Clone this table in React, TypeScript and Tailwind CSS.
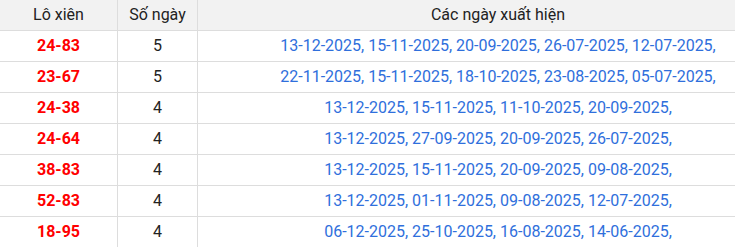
import React from "react";

const rows: [string, string, string][] = [
  ["24-83", "5", "13-12-2025, 15-11-2025, 20-09-2025, 26-07-2025, 12-07-2025,"],
  ["23-67", "5", "22-11-2025, 15-11-2025, 18-10-2025, 23-08-2025, 05-07-2025,"],
  ["24-38", "4", "13-12-2025, 15-11-2025, 11-10-2025, 20-09-2025,"],
  ["24-64", "4", "13-12-2025, 27-09-2025, 20-09-2025, 26-07-2025,"],
  ["38-83", "4", "13-12-2025, 15-11-2025, 20-09-2025, 09-08-2025,"],
  ["52-83", "4", "13-12-2025, 01-11-2025, 09-08-2025, 12-07-2025,"],
  ["18-95", "4", "06-12-2025, 25-10-2025, 16-08-2025, 14-06-2025,"],
];

export default function App() {
  return (
    <div className="w-[735px] h-[247px] overflow-hidden bg-white" style={{ fontFamily: "Roboto, 'Noto Sans', sans-serif" }}>
      <div className="w-[798px] text-[16px] leading-[30px]">
        <div className="flex h-[31px] bg-[#f2f2f2] border-b border-[#dddddd] text-[#222222]">
          <div className="w-[118px] shrink-0 border-r border-[#dddddd] text-center">Lô xiên</div>
          <div className="w-[80px] shrink-0 border-r border-[#dddddd] text-center">Số ngày</div>
          <div className="flex-1 text-center">Các ngày xuất hiện</div>
        </div>
        {rows.map(([a, b, c]) => (
          <div key={a} className="flex h-[31px] border-b border-[#dddddd]">
            <div className="w-[118px] shrink-0 border-r border-[#dddddd] text-center font-bold text-[#ff0000]">{a}</div>
            <div className="w-[80px] shrink-0 border-r border-[#dddddd] text-center text-[#222222]">{b}</div>
            <div className="flex-1 text-center text-[#2f6fdc]">{c}</div>
          </div>
        ))}
      </div>
    </div>
  );
}
